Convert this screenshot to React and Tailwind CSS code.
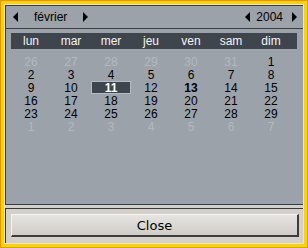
const days = [
  [26, 27, 28, 29, 30, 31, 1],
  [2, 3, 4, 5, 6, 7, 8],
  [9, 10, 11, 12, 13, 14, 15],
  [16, 17, 18, 19, 20, 21, 22],
  [23, 24, 25, 26, 27, 28, 29],
  [1, 2, 3, 4, 5, 6, 7],
];
const weekdays = ['lun', 'mar', 'mer', 'jeu', 'ven', 'sam', 'dim'];

const Left = () => (
  <svg width="6" height="10" viewBox="0 0 6 10" className="block">
    <polygon points="5,0 5,10 0,5" fill="#000" />
  </svg>
);
const Right = () => (
  <svg width="6" height="10" viewBox="0 0 6 10" className="block">
    <polygon points="1,0 1,10 6,5" fill="#000" />
  </svg>
);

export default function App() {
  return (
    <div className="w-[308px] h-[248px] bg-[#f8d400] border border-[#e09a00] p-[3px] font-['Liberation_Sans',Arial,sans-serif] text-[12px] leading-none">
      <div className="h-full flex flex-col bg-[#d4d0c8] border border-[#e6e4e0]">
        <div className="h-[200px] flex flex-col bg-[#9ca2aa] border-t border-l border-b border-[#3a3f44] border-r-[#c8c8c8]">
          <div className="h-[23px] flex items-center justify-between border-b border-[#3a3f44] pl-[7px] pr-[6px]">
            <div className="flex items-center">
              <Left />
              <span className="ml-[15px] mr-[15px] text-black">février</span>
              <Right />
            </div>
            <div className="flex items-center">
              <Left />
              <span className="ml-[5px] mr-[8px] text-black">2004</span>
              <Right />
            </div>
          </div>
          <div className="mt-[4px] ml-[5px] w-[286px] h-[16px] bg-[#3e454c] flex">
            {weekdays.map((w) => (
              <div key={w} className="w-[40px] flex items-center justify-center text-[#f4f4f4]">
                {w}
              </div>
            ))}
          </div>
          <div className="mt-[6px] ml-[5px] flex flex-col">
            {days.map((row, r) => (
              <div key={r} className="flex h-[13px]">
                {row.map((d, c) => {
                  const other = (r === 0 && c < 6) || r === 5;
                  const sel = r === 2 && c === 2;
                  const today = r === 2 && c === 4;
                  return (
                    <div key={c} className="w-[40px] h-[13px] flex items-center justify-center">
                      {sel ? (
                        <div className="w-[40px] h-[13px] flex items-center justify-center bg-[#3e454c] border border-[#b8bcc0] text-white font-bold">
                          {d}
                        </div>
                      ) : (
                        <span className={other ? 'text-[#b4b9bf]' : today ? 'text-black font-bold' : 'text-black'}>
                          {d}
                        </span>
                      )}
                    </div>
                  );
                })}
              </div>
            ))}
          </div>
        </div>
        <div className="mt-[3px] flex-1 border-t border-l border-[#3a3a3a] border-r-white border-b-white px-[5px] pt-[5px]">
          <button className="w-[288px] h-[23px] bg-gradient-to-b from-[#e6e4e0] to-[#d0cdc8] border-t border-l border-[#f6f5f3] border-r-2 border-b-2 border-r-[#3c3c3c] border-b-[#3c3c3c] font-['DejaVu_Sans',sans-serif] text-[13px] text-black flex items-center justify-center">
            Close
          </button>
        </div>
      </div>
    </div>
  );
}
